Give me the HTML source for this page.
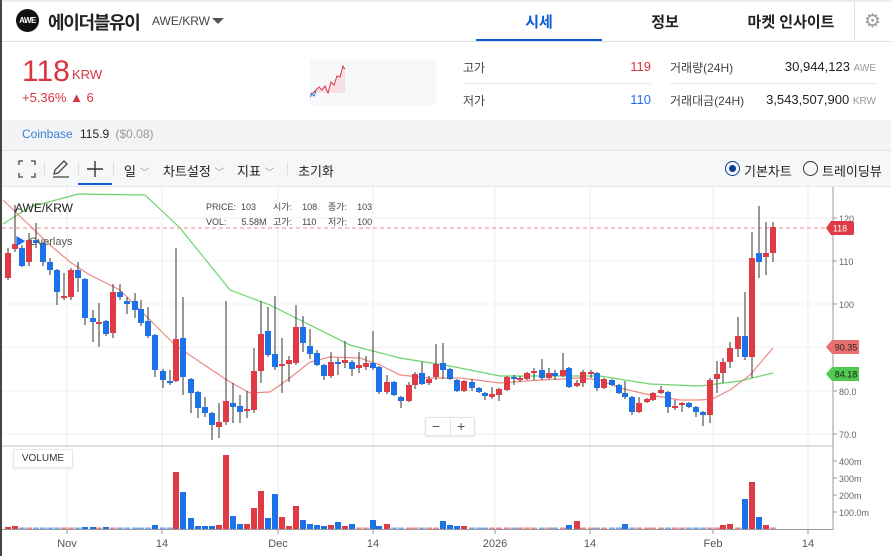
<!DOCTYPE html>
<html><head><meta charset="utf-8">
<style>
*{margin:0;padding:0;box-sizing:border-box}
body{width:891px;height:556px;overflow:hidden;background:#fff;font-family:"Liberation Sans","Noto Sans CJK KR",sans-serif;position:relative;color:#222}
.a{position:absolute;white-space:nowrap}
</style></head><body>
<div class="a" style="left:0;top:0;width:891px;height:2px;background:#e9ecf0"></div>
<div class="a" style="left:0;top:0;width:2px;height:556px;background:#444"></div>
<div class="a" style="left:2px;top:41px;width:889px;height:1px;background:#dcdfe3"></div>
<div class="a" style="left:16px;top:9px;width:23px;height:23px;border-radius:50%;background:#111;color:#fff;font-size:8px;font-weight:bold;line-height:23px;text-align:center;letter-spacing:-0.5px">AWE</div>
<div class="a" style="left:48px;top:9px;font-size:18px;font-weight:bold;color:#222;letter-spacing:-1.3px">에이더블유이</div>
<div class="a" style="left:152px;top:14px;font-size:12px;color:#444">AWE/KRW</div>
<div class="a" style="left:212px;top:18px;width:0;height:0;border-left:6px solid transparent;border-right:6px solid transparent;border-top:6px solid #555"></div>
<div class="a" style="left:476px;top:11px;width:126px;text-align:center;font-size:15px;font-weight:bold;color:#0b5cd5">시세</div>
<div class="a" style="left:476px;top:39px;width:126px;height:2px;background:#0b5cd5"></div>
<div class="a" style="left:602px;top:11px;width:126px;text-align:center;font-size:15px;font-weight:bold;color:#222">정보</div>
<div class="a" style="left:728px;top:11px;width:126px;text-align:center;font-size:15px;font-weight:bold;color:#222">마켓 인사이트</div>
<div class="a" style="left:854px;top:2px;width:1px;height:39px;background:#dcdfe3"></div>
<div class="a" style="left:864px;top:10px;font-size:19px;color:#999">⚙</div>
<div class="a" style="left:22px;top:55px;font-size:30px;color:#d9343f">118</div>
<div class="a" style="left:72px;top:67px;font-size:13px;color:#d9343f">KRW</div>
<div class="a" style="left:22px;top:90px;font-size:13px;color:#d9343f">+5.36% ▲ 6</div>
<div class="a" style="left:310px;top:60px;width:126px;height:45px;background:#f7f8fa"></div>
<svg class="a" style="left:310px;top:60px" width="40" height="40"><polygon points="3,33 6,30 9,27 12,30 15,26 18,33 21,22 24,25 27,16 30,17 33,6 34,8 35,9 35,33" fill="#f6dfe2"/><polyline points="0,34 3,33 6,30 9,27 12,30 15,26 18,33 21,22 24,25 27,16 30,17 33,6 34,8 35,9" fill="none" stroke="#d9343f" stroke-width="1"/><polyline points="0,37 2,34 4,36 6,31" fill="none" stroke="#1d6ff2" stroke-width="1"/></svg>
<div class="a" style="left:463px;top:59px;font-size:12px;color:#444">고가</div>
<div class="a" style="left:600px;top:59px;width:51px;text-align:right;font-size:13px;color:#d9343f">119</div>
<div class="a" style="left:463px;top:83px;width:188px;height:1px;background:#e4e6e9"></div>
<div class="a" style="left:463px;top:92px;font-size:12px;color:#444">저가</div>
<div class="a" style="left:600px;top:92px;width:51px;text-align:right;font-size:13px;color:#1d6ff2">110</div>
<div class="a" style="left:670px;top:59px;font-size:12px;color:#444">거래량(24H)</div>
<div class="a" style="left:700px;top:59px;width:176px;text-align:right;font-size:13px;color:#222">30,944,123 <span style="font-size:10px;color:#999">AWE</span></div>
<div class="a" style="left:670px;top:83px;width:206px;height:1px;background:#e4e6e9"></div>
<div class="a" style="left:670px;top:92px;font-size:12px;color:#444">거래대금(24H)</div>
<div class="a" style="left:700px;top:92px;width:176px;text-align:right;font-size:13px;color:#222">3,543,507,900 <span style="font-size:10px;color:#999">KRW</span></div>
<div class="a" style="left:2px;top:120px;width:889px;height:30px;background:#f3f4f6"></div>
<div class="a" style="left:22px;top:127px;font-size:12px;color:#3d7fd0">Coinbase</div>
<div class="a" style="left:80px;top:127px;font-size:12px;color:#222">115.9 <span style="color:#999;margin-left:3px">($0.08)</span></div>
<div class="a" style="left:2px;top:150px;width:889px;height:1px;background:#dcdfe3"></div>
<div class="a" style="left:2px;top:151px;width:889px;height:35px;background:#f6f7f9"></div>
<svg class="a" style="left:18px;top:160px" width="18" height="18" fill="none" stroke="#444" stroke-width="1.3"><path d="M1 5V1h4M13 1h4v4M17 13v4h-4M5 17H1v-4"/></svg>
<div class="a" style="left:44px;top:162px;width:1px;height:14px;background:#dcdfe3"></div>
<svg class="a" style="left:51px;top:159px" width="20" height="20" fill="none" stroke="#444" stroke-width="1.3"><path d="M2 18h16M3 15l1-4L13 2l3 3-9 9z"/></svg>
<div class="a" style="left:78px;top:162px;width:1px;height:14px;background:#dcdfe3"></div>
<svg class="a" style="left:86px;top:160px" width="18" height="18" stroke="#333" stroke-width="1.4"><path d="M9 1v16M1 9h16"/></svg>
<div class="a" style="left:78px;top:183px;width:34px;height:2px;background:#0b5cd5"></div>
<div class="a" style="left:113px;top:162px;width:1px;height:14px;background:#dcdfe3"></div>
<div class="a" style="left:124px;top:161px;font-size:13px;color:#222">일 <span style="color:#999;font-size:10px">﹀</span></div>
<div class="a" style="left:163px;top:161px;font-size:13px;color:#222">차트설정 <span style="color:#999;font-size:10px">﹀</span></div>
<div class="a" style="left:237px;top:161px;font-size:13px;color:#222">지표 <span style="color:#999;font-size:10px">﹀</span></div>
<div class="a" style="left:287px;top:162px;width:1px;height:14px;background:#dcdfe3"></div>
<div class="a" style="left:298px;top:161px;font-size:13px;color:#222">초기화</div>
<div class="a" style="left:725px;top:161px;width:15px;height:15px;border-radius:50%;border:1.5px solid #0b3f91"></div>
<div class="a" style="left:729px;top:165px;width:7px;height:7px;border-radius:50%;background:#0b3f91"></div>
<div class="a" style="left:744px;top:161px;font-size:13px;color:#222">기본차트</div>
<div class="a" style="left:803px;top:161px;width:15px;height:15px;border-radius:50%;border:1.3px solid #333"></div>
<div class="a" style="left:822px;top:161px;font-size:13px;color:#222">트레이딩뷰</div>
<div class="a" style="left:2px;top:186px;width:889px;height:1px;background:#e4e6e9"></div>
<svg id="ch" class="a" style="left:0;top:0" width="891" height="556" font-family="Liberation Sans, Noto Sans CJK KR, sans-serif"></svg>
<div class="a" style="left:15px;top:201px;font-size:12px;color:#222">AWE/KRW</div>
<div class="a" style="left:15px;top:233px;font-size:11px;color:#555"><span style="color:#1d6ff2">▶</span> Overlays</div>
<div class="a" style="left:206px;top:200px;font-size:9px;color:#444;line-height:15px">PRICE:&nbsp;&nbsp;103<br>VOL:&nbsp;&nbsp;&nbsp;&nbsp;&nbsp;&nbsp;5.58M</div>
<div class="a" style="left:273px;top:200px;font-size:9px;color:#444;line-height:15px">시가:&nbsp;&nbsp;&nbsp;&nbsp;108<br>고가:&nbsp;&nbsp;&nbsp;&nbsp;110</div>
<div class="a" style="left:328px;top:200px;font-size:9px;color:#444;line-height:15px">종가:&nbsp;&nbsp;&nbsp;&nbsp;103<br>저가:&nbsp;&nbsp;&nbsp;&nbsp;100</div>
<div class="a" style="left:425px;top:417px;width:50px;height:19px;background:#fff;border:1px solid #e2e4e7;border-radius:2px;box-shadow:0 1px 2px rgba(0,0,0,.1);font-size:14px;color:#555;line-height:17px"><span style="position:absolute;left:6px">−</span><span style="position:absolute;left:24px;top:0;width:1px;height:17px;background:#e2e4e7"></span><span style="position:absolute;left:31px">+</span></div>
<div class="a" style="left:13px;top:449px;width:60px;height:19px;background:#fff;border:1px solid #e6e8ea;box-shadow:0 1px 2px rgba(0,0,0,.08);font-size:10px;color:#333;line-height:17px;text-align:center">VOLUME</div>
<script>
var s=document.getElementById('ch'),h='';
var R='#e03b45',B='#1c72e8';
function L(x1,y1,x2,y2,c,w,d){h+='<line x1="'+x1+'" y1="'+y1+'" x2="'+x2+'" y2="'+y2+'" stroke="'+c+'" stroke-width="'+(w||1)+'"'+(d?' stroke-dasharray="'+d+'"':'')+'/>';}
function T(x,y,t,c,sz,a){h+='<text x="'+x+'" y="'+y+'" fill="'+c+'" font-size="'+sz+'"'+(a?' text-anchor="'+a+'"':'')+'>'+t+'</text>';}
[67,162,278,373,495,590,713,808].forEach(function(x){L(x,187,x,530,'#ececec',1);});
[218,261,304,347,391,434].forEach(function(y){L(2,y,833,y,'#f0f0f0',1);});
L(2,446,833,446,'#d5d5d5',1.5);
L(2,529.5,833,529.5,'#999',1);
L(833,187,833,530,'#999',1);
L(2,228,833,228,'#f08a8f',1,'4,3');
var ax=[[218,'120'],[261,'110'],[304,'100'],[391,'80.0'],[434,'70.0']];
ax.forEach(function(a){L(833,a[0],837,a[0],'#999');T(839,a[0]+4,a[1],'#666',9);});
[[512,'100.0m'],[495,'200m'],[478,'300m'],[461,'400m']].forEach(function(a){L(833,a[0],837,a[0],'#999');T(839,a[0]+4,a[1],'#666',9);});
[[67,'Nov'],[162,'14'],[278,'Dec'],[373,'14'],[495,'2026'],[590,'14'],[713,'Feb'],[808,'14']].forEach(function(a){L(a[0],530,a[0],534,'#999');T(a[0],547,a[1],'#555',11,'middle');});
var r=[[3,200],[50,245],[70,262],[90,275],[120,290],[150,320],[175,345],[200,362],[230,382],[250,393],[270,392],[290,378],[310,362],[330,357],[360,358],[380,365],[400,375],[430,378],[460,378],[500,383],[540,380],[580,378],[600,380],[620,388],[650,395],[680,400],[700,400],[712,399],[730,390],[750,375],[773,348]];
var gp=[[3,224],[30,207],[78,194],[145,195],[180,228],[230,290],[270,305],[300,320],[350,345],[400,358],[450,366],[500,376],[600,376],[650,384],[700,386],[740,381],[773,373]];
h+='<polyline fill="none" stroke="#6cd36c" stroke-width="1.2" points="'+gp.join(' ')+'"/>';
h+='<polyline fill="none" stroke="#ee8a84" stroke-width="1.2" points="'+r.join(' ')+'"/>';
var C=[[8,R,253,278,248,280],[15,R,244,249,205,252],[22,B,248,266,245,267],[29,R,240,262,233,266],[36,B,240,243,223,248],[43,B,243,262,242,266],[50,B,262,270,258,275],[57,B,270,292,269,305],[64,R,296,297,273,300],[71,R,270,297,268,300],[78,B,270,278,262,292],[85,B,279,318,278,325],[93,B,318,322,310,342],[99,R,322,324,303,347],[106,B,321,334,320,336],[113,R,292,333,284,338],[120,B,292,297,284,300],[127,B,301,304,297,314],[135,B,301,310,293,318],[141,B,309,323,300,326],[148,B,321,336,307,338],[155,B,335,370,334,377],[163,B,371,380,369,388],[170,B,381,383,370,385],[176,R,339,381,248,382],[183,B,338,377,297,395],[191,B,379,393,378,413],[198,B,392,408,391,418],[205,B,407,413,397,417],[212,B,413,425,412,440],[219,R,422,427,403,438],[226,R,401,422,301,425],[233,B,403,407,383,423],[240,B,406,412,395,423],[247,R,409,411,391,418],[254,R,371,410,348,413],[261,R,334,371,301,383],[268,B,331,355,307,357],[275,B,354,367,296,370],[282,R,364,366,338,393],[289,R,360,364,356,382],[296,R,327,363,305,365],[303,B,327,343,316,352],[310,B,346,354,329,359],[317,B,353,365,350,366],[324,B,365,376,364,380],[331,R,362,376,352,378],[338,B,362,364,358,375],[345,R,360,363,341,368],[352,B,362,369,360,376],[359,R,365,368,352,373],[366,R,363,367,356,370],[373,B,363,368,331,370],[379,B,367,392,366,394],[387,R,382,392,375,394],[394,B,382,395,381,396],[401,B,397,401,396,408],[409,R,385,401,382,402],[415,R,374,385,372,389],[422,B,373,384,362,385],[429,R,379,383,376,385],[436,R,364,377,344,380],[443,B,363,370,343,379],[450,B,369,379,368,380],[457,B,380,391,379,392],[464,R,381,391,380,392],[472,B,382,388,379,391],[479,B,388,392,387,393],[485,B,393,396,392,400],[492,R,394,397,387,399],[499,R,389,395,388,401],[507,R,377,390,376,391],[514,B,377,379,375,385],[520,R,378,380,376,382],[527,R,373,379,372,380],[534,R,371,373,368,380],[542,B,370,378,359,380],[549,R,373,378,368,379],[555,B,373,376,370,380],[563,R,370,376,353,377],[569,B,368,387,367,388],[577,R,383,386,380,387],[583,R,372,383,370,387],[591,R,372,374,370,378],[597,B,373,388,372,391],[604,R,379,388,378,389],[612,B,380,385,379,386],[619,B,385,393,384,394],[625,B,393,397,381,399],[632,B,397,412,396,415],[639,R,403,412,397,413],[647,R,399,402,398,403],[653,R,393,400,392,401],[661,R,390,393,386,394],[668,B,392,407,391,413],[675,R,406,408,400,410],[682,R,403,405,402,412],[689,B,403,407,402,408],[696,B,407,412,406,417],[703,B,412,415,411,426],[710,R,380,415,378,423],[717,R,374,379,361,393],[723,R,362,373,358,383],[730,R,348,362,342,368],[738,R,336,349,317,357],[745,B,336,357,292,360],[752,R,258,357,232,378],[759,B,253,262,206,278],[766,R,253,257,222,275],[773,R,227,253,222,262]];
var V={176:57,183:37,190:11,197:3,204:3,211:3,218:4,225:74,232:13,239:5,246:5,253:21,260:38,267:11,274:35,281:12,288:3,295:23,302:9,309:5,316:4,324:3,331:4,338:7,345:3,352:5,373:9,379:3,387:5,433:21,443:8,450:4,457:3,464:3,560:14,567:4,576:8,624:5,707:15,714:9,721:4,728:5,735:8,743:30,750:47,757:12,764:4,15:3,8:2,85:2,93:2,106:2,155:4};
C.forEach(function(c){
 L(c[0],c[4],c[0],c[5],'#333',1);
 h+='<rect x="'+(c[0]-3)+'" y="'+c[2]+'" width="6" height="'+Math.max(2,c[3]-c[2])+'" fill="'+c[1]+'"/>';
 var k=null;for(var d=-2;d<=2;d++){if(V[c[0]+d]){k=V[c[0]+d];break;}}
 var v=k||1.5;
 h+='<rect x="'+(c[0]-3)+'" y="'+(529-v)+'" width="6" height="'+v+'" fill="'+c[1]+'" opacity="'+(k?1:0.6)+'"/>';
});
function tag(y,t,bg,fc){h+='<path d="M826 '+y+' L831 '+(y-7)+' L852 '+(y-7)+' Q854 '+(y-7)+' 854 '+(y-5)+' L854 '+(y+5)+' Q854 '+(y+7)+' 852 '+(y+7)+' L831 '+(y+7)+' Z" fill="'+bg+'"/>';T(840,y+3.5,t,fc,9,'middle');}
function tag2(y,t,bg,fc){h+='<path d="M826 '+y+' L832 '+(y-7)+' L859 '+(y-7)+' L859 '+(y+7)+' L832 '+(y+7)+' Z" fill="'+bg+'"/>';T(846,y+3.5,t,fc,9,'middle');}
tag(228,'118','#e03b45','#fff');
tag2(347,'90.35','#e8716f','#222');
tag2(374,'84.18','#4fc94f','#222');
s.innerHTML=h;
</script>
</body></html>
